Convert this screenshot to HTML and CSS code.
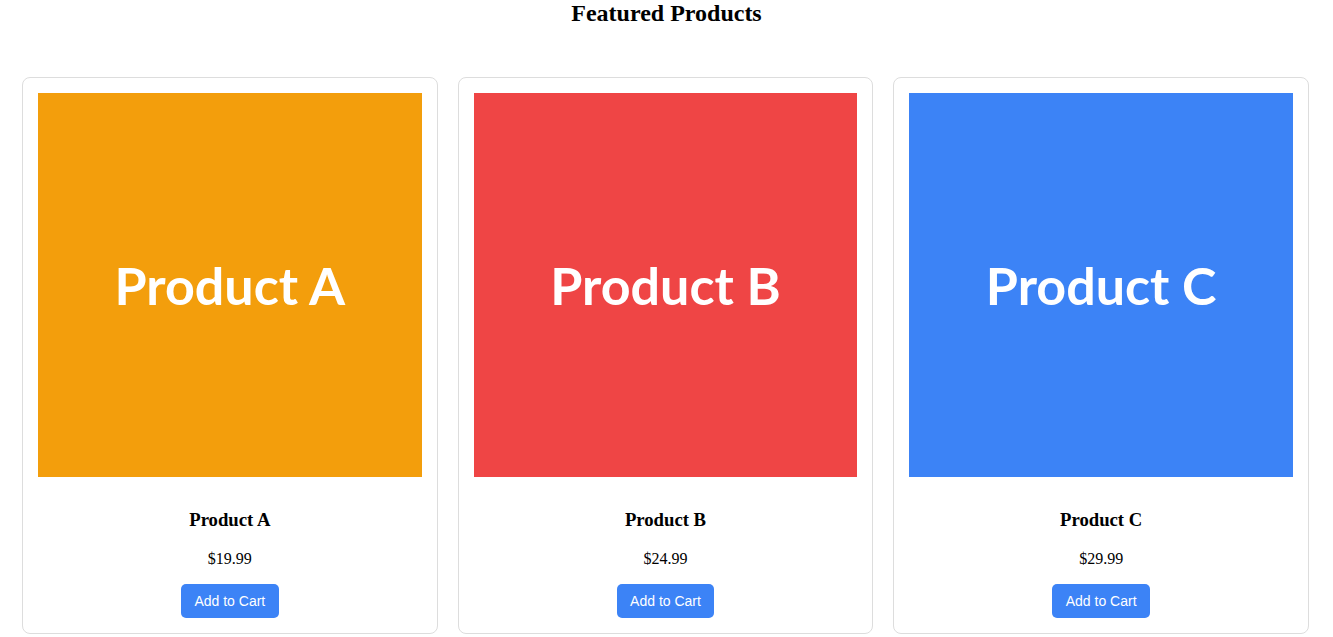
FILE: index.html
```html
<!DOCTYPE html>
<html lang="en">
<head>
<meta charset="utf-8">
<title>Featured Products</title>
<link rel="stylesheet" href="styles.css">
</head>
<body>
<h2 class="title">Featured Products</h2>
<div class="grid">
  <div class="card">
    <div class="thumb thumb-a"><span>Product A</span></div>
    <div class="info">
      <h3 class="name">Product A</h3>
      <p class="price">$19.99</p>
      <button class="btn">Add to Cart</button>
    </div>
  </div>
  <div class="card">
    <div class="thumb thumb-b"><span>Product B</span></div>
    <div class="info">
      <h3 class="name">Product B</h3>
      <p class="price">$24.99</p>
      <button class="btn">Add to Cart</button>
    </div>
  </div>
  <div class="card">
    <div class="thumb thumb-c"><span>Product C</span></div>
    <div class="info">
      <h3 class="name">Product C</h3>
      <p class="price">$29.99</p>
      <button class="btn">Add to Cart</button>
    </div>
  </div>
</div>
</body>
</html>
```
FILE: styles.css
```css
html, body {
  margin: 0;
  padding: 0;
  background: #ffffff;
}
body {
  font-family: "Liberation Serif", "Times New Roman", serif;
  color: #000;
}
.title {
  margin: 0;
  font-size: 24px;
  font-weight: bold;
  text-align: center;
  line-height: 26px;
}
.grid {
  display: grid;
  grid-template-columns: repeat(3, 1fr);
  gap: 20px;
  padding: 51px 24px 0 22px;
}
.card {
  border: 1px solid #dddddd;
  border-radius: 8px;
  padding: 15px;
  text-align: center;
}
.thumb {
  aspect-ratio: 1 / 1;
  display: flex;
  align-items: center;
  justify-content: center;
  color: #ffffff;
  font-family: Lato, "Noto Sans", sans-serif;
  font-weight: bold;
  font-size: 52px;
}
.thumb-a { background: #f39e0c; }
.thumb-b { background: #ef4545; }
.thumb-c { background: #3c83f6; }
.info {
  padding-top: 15px;
}
.name {
  margin: 17px 0 19px;
  font-size: 18.72px;
  line-height: 22px;
}
.price {
  margin: 0 0 16px;
  font-size: 16px;
  line-height: 18px;
}
.btn {
  background: #3c83f6;
  color: #ffffff;
  border: none;
  border-radius: 5px;
  font-family: "Liberation Sans", Arial, sans-serif;
  font-size: 14px;
  line-height: 16px;
  padding: 9px 13.5px;
  cursor: pointer;
  vertical-align: top;
}
```
